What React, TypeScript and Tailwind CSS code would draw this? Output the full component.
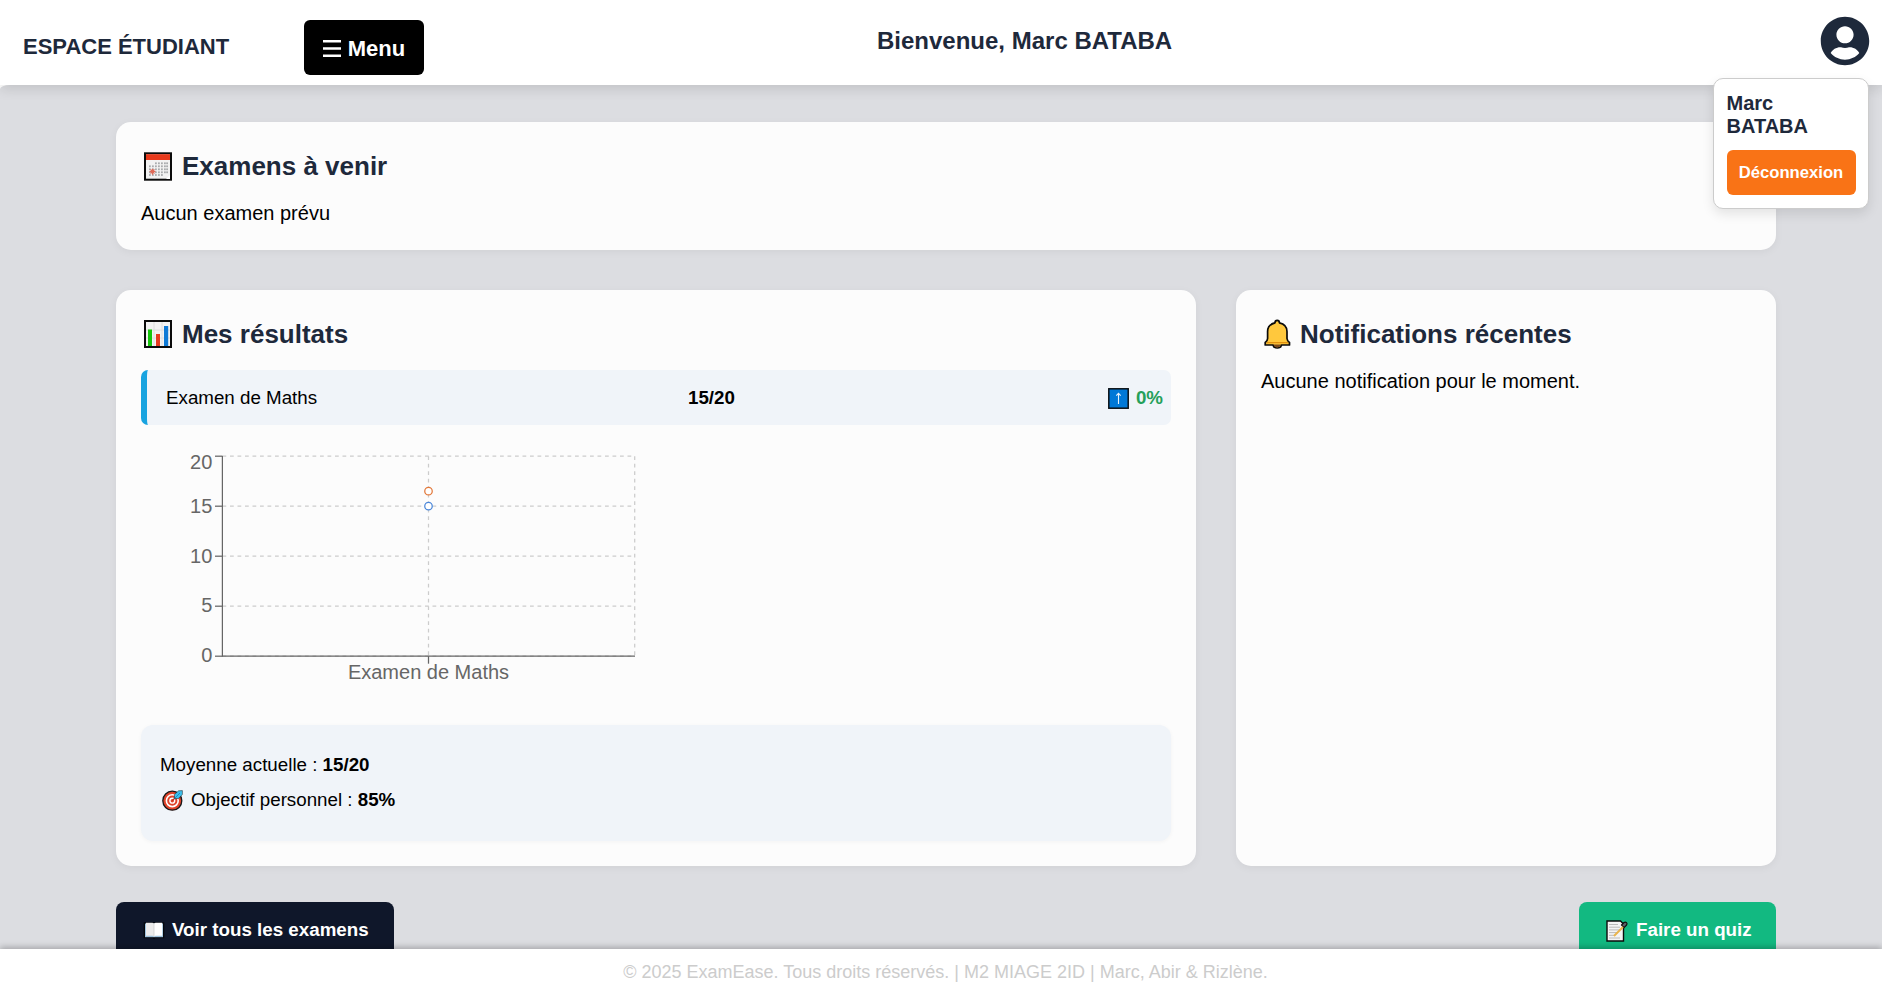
import { FaUserCircle } from "react-icons/fa";

const CalendarIcon = () => (
  <svg className="ml-[3px] mr-[10px] h-[29px] w-[28px] shrink-0" viewBox="0 0 28 29">
    <rect x="1" y="1.3" width="26" height="26.4" fill="#f2f2f2" stroke="#0b0b0b" strokeWidth="2" />
    <rect x="2" y="2.2" width="24" height="5.8" fill="#e8391b" />
    <g fill="#a9abad">
      {[10.4, 13.4, 16.4, 19.4, 22.1].map((y, r) =>
        [5, 8, 11, 14, 17, 20, 22.2].map((x, c) =>
          (r === 0 && c < 2) || (r === 4 && c > 4) ? null : (
            <rect key={`${r}-${c}`} x={x} y={y} width="1.8" height="1.8" />
          )
        )
      )}
    </g>
    <path d="M5.5 19.5h6M8.5 16.7v6M6.5 17.5l4 4M10.5 17.5l-4 4" stroke="#e06a58" strokeWidth="1.1" />
    <path d="M26 23v4h-4z" fill="#fff" />
  </svg>
);

const BarsIcon = () => (
  <svg className="ml-[3px] mr-[10px] h-[28px] w-[28px] shrink-0" viewBox="0 0 28 28">
    <rect x="1" y="1" width="26" height="26" fill="#f3f3f3" stroke="#0b0b0b" strokeWidth="2" />
    <path d="M10 2v24M18 2v24M2 10h24M2 18h24" stroke="#dedede" strokeWidth="1" />
    <rect x="4" y="9.5" width="4" height="16.5" fill="#16c60c" />
    <rect x="12" y="14" width="4" height="12" fill="#e83b1f" />
    <rect x="20" y="6" width="4.2" height="20" fill="#0f7ad6" />
  </svg>
);

const BellIcon = () => (
  <svg className="ml-[3px] mr-[9px] h-[30px] w-[27px] shrink-0" viewBox="0 0 27 30">
    <path
      d="M11 3.8Q11 1.3 13.200 1.3Q15.400 1.3 15.400 3.8Q23 5.5 23 12.5V19.5Q23.300 22.2 25.500 23.5V26H17.500L16.500 28Q13.200 30 10 28L9 26H1.200V23.500Q3.500 22 3.600 19.500V12.500Q3.600 5.500 11 3.800Z"
      fill="#ffc83d"
      stroke="#0b0b0b"
      strokeWidth="1.7"
      strokeLinejoin="round"
    />
    <path d="M3.3 22.9h20.2l1 1.3H2.300z" fill="#d67d00" opacity=".75" />
    <path d="M9.6 25.600h7.2q-.8 2.800-3.600 2.800T9.600 25.600z" fill="#7d4a1d" />
  </svg>
);

const UpIcon = () => (
  <svg className="mr-[7px] h-[21px] w-[21px] shrink-0" viewBox="0 0 21 21">
    <rect x=".8" y=".8" width="19.4" height="19.4" fill="#0078d7" stroke="#0a0f14" strokeWidth="1.5" />
    <path d="M10.5 16V6M8.3 7.6l2.2-2.2 2.2 2.2" fill="none" stroke="#e8f2fb" strokeWidth="1.1" />
  </svg>
);

const TargetIcon = () => (
  <svg className="ml-[2px] mr-[8px] h-[21px] w-[21px] shrink-0" viewBox="0 0 21 21">
    <circle cx="10.3" cy="10.7" r="9.5" fill="#e0432a" stroke="#16181a" strokeWidth="1.3" />
    <circle cx="10.3" cy="10.7" r="5.9" fill="none" stroke="#fff" strokeWidth="1.6" />
    <circle cx="10.3" cy="10.7" r="2.4" fill="#e0432a" stroke="#fff" strokeWidth="1.4" />
    <path d="M10.3 10.7l4-4" stroke="#b8301c" strokeWidth="1.2" />
    <path d="M12.3 8.8l.2-4.200L16.500.8l3.900-.2v3.800l-3.800 4z" fill="#3cc0ee" stroke="#16181a" strokeWidth=".5" />
    <path d="M12.5 8.5l5.500-5.500" stroke="#1277b0" strokeWidth=".7" />
  </svg>
);

const BookIcon = () => (
  <svg className="mr-[7px] h-[19px] w-[22px] shrink-0" viewBox="0 0 22 19">
    <path d="M.7 1.2h20.6v16h-9L11 18.300l-1.300-1.100h-9z" fill="#04070d" />
    <path d="M2 2.5h18v13.7H2z" fill="#9fc3de" />
    <path d="M3 1.7h6.500L11 2.600v13l-1.500-.9H3z" fill="#ececec" />
    <path d="M19.200 1.700h-6.700L11 2.600v13l1.500-.9h6.700z" fill="#fff" />
    <path d="M11 2.5v13" stroke="#cfcfcf" strokeWidth=".8" />
  </svg>
);

const MemoIcon = () => (
  <svg className="mr-[8px] h-[22px] w-[22px] shrink-0" viewBox="0 0 22 22">
    <path d="M1 1h13.500l3 3v17H1z" fill="#f4f4f4" stroke="#0b0b0b" strokeWidth="1.4" />
    <path d="M3 4.500h9M3 7.200h11M3 9.900h11M3 12.600h9M3 15.300h6M3 18h11" stroke="#b3b3b3" strokeWidth=".9" />
    <path d="M15.500 5l2.500-2.500q1.500-.8 2.500.2t0 2.500L18 7.700z" fill="#5b5f63" stroke="#0b0b0b" strokeWidth="1.1" />
    <path d="M8 16l9-9" stroke="#e9b44c" strokeWidth="2" />
  </svg>
);

const ticks = [
  { label: "20", y: 31.2, ty: 43.5 },
  { label: "15", y: 81.2, ty: 87.5 },
  { label: "10", y: 131.2, ty: 137.5 },
  { label: "5", y: 181.2, ty: 187.3 },
  { label: "0", y: 231.2, ty: 237.3 },
];

const ResultsChart = () => (
  <svg className="block h-[300px] w-[520px]" viewBox="0 0 520 300" fontSize="20">
    <g stroke="#ccc" strokeWidth="1.25" strokeDasharray="3.75 3.75">
      {ticks.map((t) => (
        <line key={t.label} x1="81.5" x2="494" y1={t.y} y2={t.y} />
      ))}
      <line x1="287.5" x2="287.5" y1="31.2" y2="231.2" />
      <line x1="493.7" x2="493.7" y1="31.2" y2="231.2" />
    </g>
    <g stroke="#666" strokeWidth="1.25">
      <line x1="81.4" x2="81.4" y1="31" y2="231.8" />
      <line x1="81.5" x2="494" y1="231.2" y2="231.2" />
      <line x1="287.5" x2="287.5" y1="231.2" y2="238.700" />
      {ticks.map((t) => (
        <line key={t.label} x1="74" x2="81.5" y1={t.y} y2={t.y} />
      ))}
    </g>
    <g fill="#666" textAnchor="end">
      {ticks.map((t) => (
        <text key={t.label} x="71.3" y={t.ty}>{t.label}</text>
      ))}
    </g>
    <text x="287.5" y="254.3" fill="#666" textAnchor="middle">Examen de Maths</text>
    <circle cx="287.5" cy="81.2" r="3.75" fill="#fff" stroke="#4a86d8" strokeWidth="1.25" />
    <circle cx="287.5" cy="66.2" r="3.75" fill="#fff" stroke="#e2783a" strokeWidth="1.25" />
  </svg>
);

const card = "rounded-[15px] bg-[#fcfcfc] p-[25px] shadow-[0_2px_8px_rgba(0,0,0,0.05)]";
const heading = "flex h-[38px] items-center text-[26px] leading-[38px] font-bold text-[#1e293b]";

export default function App() {
  return (
    <div className="flex h-[995px] w-full flex-col overflow-hidden bg-white font-['Liberation_Sans',Arial,sans-serif] text-black">
      <header className="relative z-20 flex h-[85px] shrink-0 bg-white text-[#1e293b] shadow-[0_4px_12px_rgba(0,0,0,0.12)]">
        <div className="mt-[34px] ml-[23px] w-[281px] text-[22px] leading-[26px] font-bold">ESPACE ÉTUDIANT</div>
        <button className="mt-[20px] flex h-[55px] w-[120px] items-center justify-center rounded-[6px] bg-black pt-[2px] text-[22px] font-bold text-white">
          <svg className="mr-[7px] h-[17px] w-[18px]" viewBox="0 0 18 17">
            <path d="M0 1.300h18M0 8.500h18M0 15.700h18" stroke="#fff" strokeWidth="2.4" />
          </svg>
          Menu
        </button>
        <h1 className="mt-[27px] ml-[453px] text-[24px] leading-[28px] font-bold">Bienvenue, Marc BATABA</h1>
        <div className="relative mt-[16px] mr-[12px] ml-auto h-[50px] w-[50px]">
          <FaUserCircle className="h-[50px] w-[50px]" />
          <div className="absolute top-[62px] right-px w-[156px] rounded-[10px] border border-[#ccc] bg-white p-[12.5px] shadow-[0_5px_12px_rgba(0,0,0,0.1)]">
            <div className="text-[20px] leading-[23px] font-bold">Marc BATABA</div>
            <button className="mt-[12.5px] flex h-[45px] w-full items-center justify-center rounded-[6px] bg-[#f97316] text-[16.67px] font-bold text-white">
              Déconnexion
            </button>
          </div>
        </div>
      </header>

      <main className="min-h-0 flex-1 overflow-hidden rounded-tl-[10px_4px] bg-[#dcdde1] pt-[37px] pr-[106px] pl-[116px]">
        <section className={`h-[128px] ${card}`}>
          <h2 className={heading}><CalendarIcon />Examens à venir</h2>
          <p className="mt-[16px] text-[20px] leading-[24px]">Aucun examen prévu</p>
        </section>

        <div className="mt-[40px] grid h-[575px] grid-cols-[1080px_540px] gap-[40px]">
          <section className={card}>
            <h2 className={heading}><BarsIcon />Mes résultats</h2>
            <div className="mt-[17px] flex h-[55px] items-center rounded-[7px] border-l-[6px] border-[#18a3e0] bg-[#f0f4f9] pt-px pr-[8px] pl-[19px] text-[18.75px]">
              <span className="w-[522px]">Examen de Maths</span>
              <strong>15/20</strong>
              <span className="ml-auto flex items-center pt-px font-bold text-[#25a05a]"><UpIcon />0%</span>
            </div>
            <ResultsChart />
            <div className="flex h-[116px] flex-col gap-[5px] rounded-[12px] bg-[#f0f4f9] pt-[25px] pl-[19px] text-[18.75px] leading-[30px] shadow-[0_1px_4px_rgba(0,0,0,0.04)]">
              <p>Moyenne actuelle : <strong>15/20</strong></p>
              <p className="flex items-center">
                <TargetIcon />
                <span>Objectif personnel : <strong>85%</strong></span>
              </p>
            </div>
          </section>
          <section className={card}>
            <h2 className={heading}><BellIcon />Notifications récentes</h2>
            <p className="mt-[16px] text-[20px] leading-[24px]">Aucune notification pour le moment.</p>
          </section>
        </div>

        <div className="mt-[37px] flex justify-between text-[18.75px] font-bold text-white">
          <button className="flex h-[57px] w-[278px] items-center rounded-[8px] bg-[#0f172a] pl-[27px]">
            <BookIcon />Voir tous les examens
          </button>
          <button className="flex h-[57px] w-[197px] items-center rounded-[8px] bg-[#12b981] pl-[27px]">
            <MemoIcon />Faire un quiz
          </button>
        </div>
      </main>

      <footer className="relative z-10 h-[46px] shrink-0 bg-white pl-[9px] text-center text-[18px] leading-[47px] text-[#ccc] shadow-[0_-2px_6px_rgba(0,0,0,0.25)]">
        © 2025 ExamEase. Tous droits réservés. | M2 MIAGE 2ID | Marc, Abir &amp; Rizlène.
      </footer>
    </div>
  );
}
